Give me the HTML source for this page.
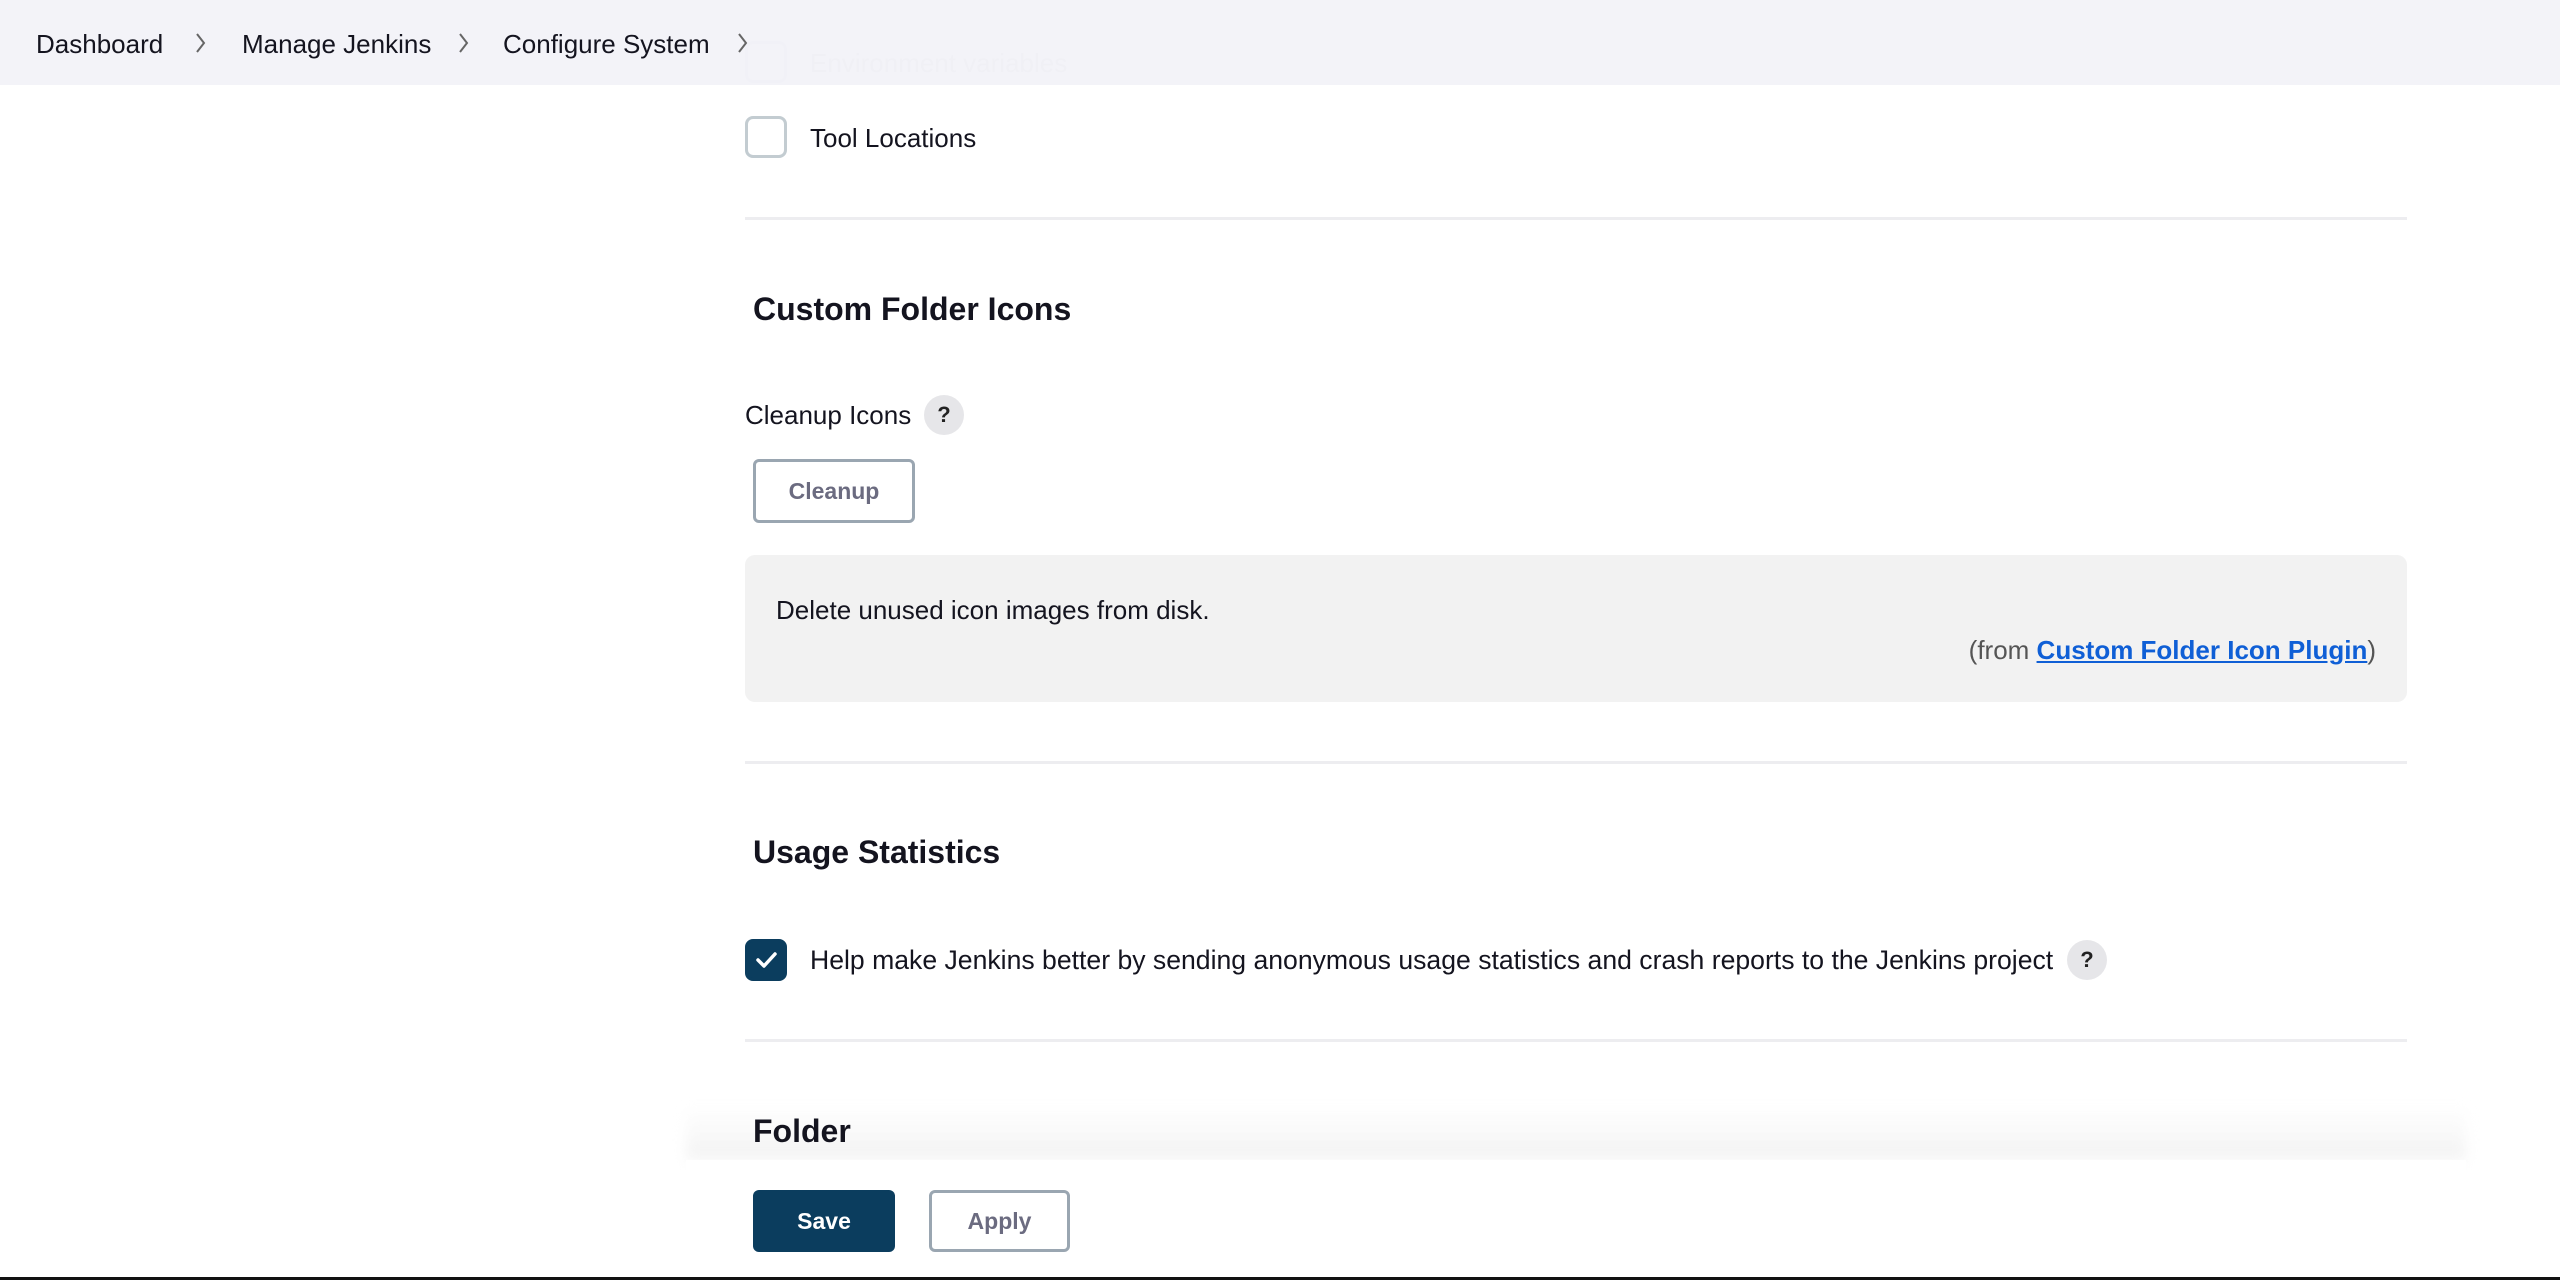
<!DOCTYPE html>
<html><head><meta charset="utf-8"><style>
*{margin:0;padding:0;box-sizing:border-box}
body{width:2560px;height:1280px;overflow:hidden;background:#fff;font-family:"Liberation Sans",sans-serif;color:#14141f;position:relative}
.a{position:absolute;white-space:nowrap}
.t{font-size:26px;line-height:1}
.cb{position:absolute;width:42px;height:42px;border:3px solid #c3ccd1;border-radius:8px;background:#fff}
.sep{position:absolute;left:745px;width:1662px;height:3px;background:#ededf0}
.h2{font-size:32px;font-weight:bold;line-height:1}
.help{position:absolute;width:40px;height:40px;border-radius:50%;background:#e6e6e9;color:#222;font-weight:bold;font-size:22px;text-align:center;line-height:40px}
.chev{position:absolute;top:30px}
</style></head><body>
<div class="cb" style="left:745px;top:41px;border-color:#e2e6e8"></div>
<div class="a t" style="left:810px;top:50px;color:#d0d0d8">Environment variables</div>
<div style="position:absolute;left:0;top:0;width:2560px;height:85px;background:rgba(242,242,247,0.92)"></div>
<div class="a t" style="left:36px;top:31px">Dashboard</div>
<svg class="chev" style="left:194px" width="14" height="26" viewBox="0 0 14 26"><path d="M3 4l7 9-7 9" stroke="#666" stroke-width="2" fill="none"/></svg>
<div class="a t" style="left:242px;top:31px">Manage Jenkins</div>
<svg class="chev" style="left:457px" width="14" height="26" viewBox="0 0 14 26"><path d="M3 4l7 9-7 9" stroke="#666" stroke-width="2" fill="none"/></svg>
<div class="a t" style="left:503px;top:31px">Configure System</div>
<svg class="chev" style="left:736px" width="14" height="26" viewBox="0 0 14 26"><path d="M3 4l7 9-7 9" stroke="#666" stroke-width="2" fill="none"/></svg>

<div class="cb" style="left:745px;top:116px"></div>
<div class="a t" style="left:810px;top:125px">Tool Locations</div>
<div class="sep" style="top:217px"></div>

<div class="a h2" style="left:753px;top:293px">Custom Folder Icons</div>
<div class="a t" style="left:745px;top:402px">Cleanup Icons</div>
<div class="help" style="left:924px;top:395px">?</div>
<div class="a" style="left:753px;top:459px;width:162px;height:64px;border:3px solid #9aa6b1;border-radius:6px;color:#6b6b80;font-weight:bold;font-size:23px;text-align:center;line-height:58px">Cleanup</div>
<div class="a" style="left:745px;top:555px;width:1662px;height:147px;background:#f2f2f2;border-radius:10px"></div>
<div class="a t" style="left:776px;top:597px">Delete unused icon images from disk.</div>
<div class="a t" style="right:184px;top:637px;color:#555">(from <span style="color:#0f5fd6;text-decoration:underline;font-weight:bold">Custom Folder Icon Plugin</span>)</div>
<div class="sep" style="top:761px"></div>

<div class="a h2" style="left:753px;top:836px">Usage Statistics</div>
<div class="cb" style="left:745px;top:939px;background:#0b3d5e;border-color:#0b3d5e"><svg width="36" height="36" viewBox="0 0 36 36" style="position:absolute;left:0;top:0"><path d="M10 18l6 6 11-12" stroke="#fff" stroke-width="3.5" fill="none" stroke-linecap="round" stroke-linejoin="round"/></svg></div>
<div class="a" style="left:810px;top:947px;font-size:26.6px;line-height:1">Help make Jenkins better by sending anonymous usage statistics and crash reports to the Jenkins project</div>
<div class="help" style="left:2067px;top:940px">?</div>
<div class="sep" style="top:1039px"></div>

<div class="a t" style="left:745px;top:1226px;color:#d0d0d6">Health metrics</div>
<div class="a" style="left:686px;top:1105px;width:1780px;height:55px;background:linear-gradient(rgba(255,255,255,0),rgba(238,238,238,0.7));filter:blur(6px)"></div>
<div class="a h2" style="left:753px;top:1115px">Folder</div>
<div class="a" style="left:686px;top:1160px;width:1780px;height:116px;background:#fff"></div>
<div class="a" style="left:753px;top:1190px;width:142px;height:62px;background:#0b3d5e;border-radius:6px;color:#fff;font-weight:bold;font-size:23px;text-align:center;line-height:62px">Save</div>
<div class="a" style="left:929px;top:1190px;width:141px;height:62px;border:3px solid #9aa6b1;border-radius:6px;color:#6b6b80;font-weight:bold;font-size:23px;text-align:center;line-height:56px">Apply</div>
<div class="a" style="left:0;top:1277px;width:2560px;height:3px;background:#111"></div>
</body></html>
